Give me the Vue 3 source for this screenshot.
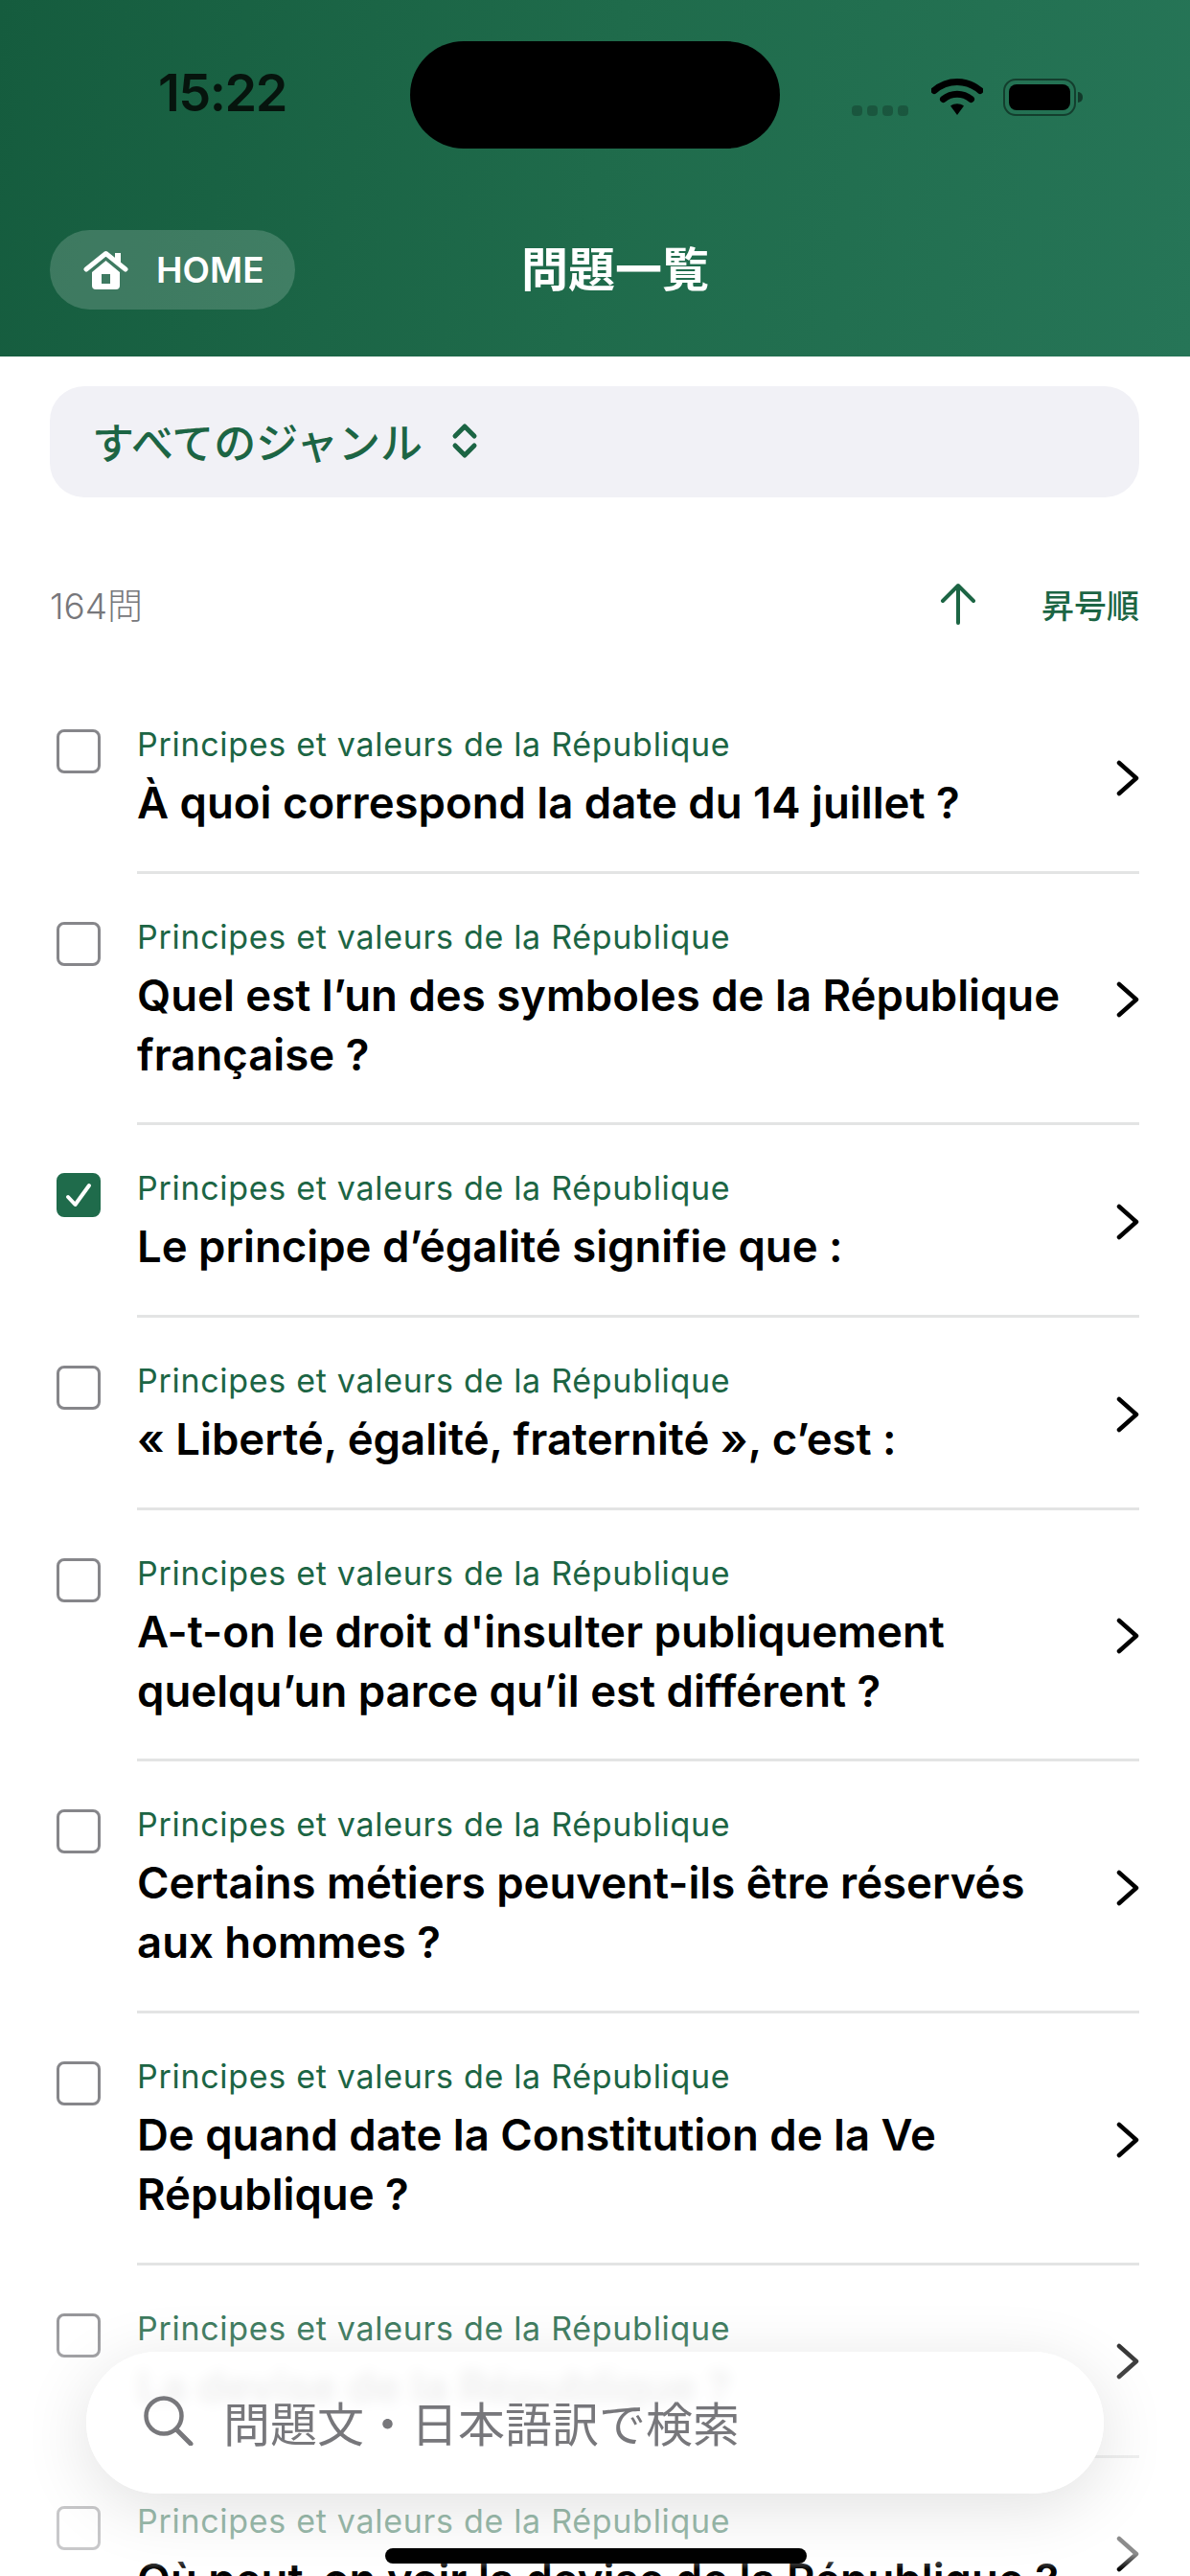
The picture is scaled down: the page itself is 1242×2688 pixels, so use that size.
<template>
  <div class="screen">
    <header class="header">
      <div class="status-bar">
        <span class="time">15:22</span>
        <div class="status-icons">
          <div class="signal">
            <i v-for="n in 4" :key="n"></i>
          </div>
          <svg class="wifi" width="54" height="40" viewBox="0 0 54 40">
            <path d="M3 13.5C17 1.5 37 1.5 51 13.5" fill="none" stroke="#000" stroke-width="7" stroke-linecap="round" />
            <path d="M12.5 22.5C21 15.5 33 15.5 41.5 22.5" fill="none" stroke="#000" stroke-width="7" stroke-linecap="round" />
            <path d="M20 29.5C24.500 26.500 29.500 26.500 34 29.500L27 39Z" fill="#000" />
          </svg>
          <div class="battery"><div class="battery-fill"></div></div>
          <div class="battery-nub"></div>
        </div>
      </div>
      <div class="island"></div>
      <div class="nav">
        <div class="home-pill">
          <svg width="47" height="41" viewBox="0 0 47 41">
            <path d="M33 3h6v11h-6z" fill="#fff" />
            <path d="M3 20L23.500 3.500L44 20" fill="none" stroke="#fff" stroke-width="5" stroke-linecap="round" stroke-linejoin="round" />
            <path fill-rule="evenodd" d="M23.500 11L38 23V37a4 4 0 0 1-4 4H13a4 4 0 0 1-4-4V23ZM19 25v10h9V25Z" fill="#fff" />
          </svg>
          <span>HOME</span>
        </div>
        <h1 class="title">問題一覧</h1>
      </div>
    </header>

    <div class="filter">
      <span>すべてのジャンル</span>
      <svg width="28" height="40" viewBox="0 0 28 40">
        <path d="M4 15L14 5L24 15M4 25L14 35L24 25" fill="none" stroke="#1c6544" stroke-width="5" stroke-linecap="round" stroke-linejoin="round" />
      </svg>
    </div>

    <div class="sort-row">
      <span class="count">164問</span>
      <div class="sort">
        <svg width="38" height="44" viewBox="0 0 38 44">
          <path d="M19 42V3M3 19L19 3L35 19" fill="none" stroke="#1c6544" stroke-width="4" stroke-linecap="round" stroke-linejoin="round" />
        </svg>
        <span>昇号順</span>
      </div>
    </div>

    <div class="list">
      <div v-for="(q, i) in questions" :key="i" class="row">
        <div :class="['checkbox', { checked: q.done }]">
          <svg v-if="q.done" width="28" height="26" viewBox="0 0 28 26">
            <path d="M3 15L10.500 23L25 3" fill="none" stroke="#fff" stroke-width="4" stroke-linecap="round" stroke-linejoin="round" />
          </svg>
        </div>
        <div class="row-body">
          <div class="row-text">
            <div class="category">Principes et valeurs de la République</div>
            <div class="question">{{ q.text }}</div>
          </div>
          <svg class="chevron" width="24" height="38" viewBox="0 0 24 38">
            <path d="M3 3L21 19L3 35" fill="none" stroke="#000" stroke-width="4.500" stroke-linecap="round" stroke-linejoin="round" />
          </svg>
        </div>
      </div>
    </div>

    <div class="fade"></div>
    <div class="search">
      <svg width="52" height="52" viewBox="0 0 52 52">
        <circle cx="21" cy="21" r="18.500" fill="none" stroke="#77777b" stroke-width="4.500" />
        <path d="M34 35L49 50" fill="none" stroke="#77777b" stroke-width="5" stroke-linecap="round" />
      </svg>
      <span class="placeholder">問題文・日本語訳で検索</span>
    </div>
    <div class="home-indicator"></div>
  </div>
</template>

<script setup>
const questions = [
  { text: 'À quoi correspond la date du 14 juillet ?' },
  { text: 'Quel est l’un des symboles de la République française ?' },
  { text: 'Le principe d’égalité signifie que :', done: true },
  { text: '« Liberté, égalité, fraternité », c’est :' },
  { text: "A-t-on le droit d'insulter publiquement quelqu’un parce qu’il est différent ?" },
  { text: 'Certains métiers peuvent-ils être réservés aux hommes ?' },
  { text: 'De quand date la Constitution de la Ve République ?' },
  { text: 'La devise de la République ?' },
  { text: 'Où peut-on voir la devise de la République ?' },
]
</script>

<style>
html,
body {
  margin: 0;
  background: #fff;
}
</style>

<style scoped>
.screen {
  position: relative;
  width: 1242px;
  height: 2688px;
  overflow: hidden;
  background: #fff;
  font-family: Inter, "Noto Sans CJK JP", sans-serif;
}

.header {
  box-sizing: border-box;
  height: 372px;
  padding-top: 73px;
  background: linear-gradient(100deg, #155c3e 0%, #1f6b4b 50%, #267557 100%);
}

.status-bar {
  display: flex;
  justify-content: space-between;
  align-items: flex-end;
  height: 48px;
  padding: 0 112px 0 165px;
}

.time {
  font-size: 54px;
  font-weight: 600;
  line-height: 48px;
  letter-spacing: -1.5px;
  color: #06140d;
}

.status-icons {
  display: flex;
  align-items: flex-end;
}

.signal {
  display: flex;
  gap: 5px;
  margin-right: 24px;
}

.signal i {
  width: 11px;
  height: 11px;
  border-radius: 4px;
  background: rgba(0, 0, 0, 0.22);
}

.wifi {
  margin-right: 21px;
}

.battery {
  box-sizing: border-box;
  width: 76px;
  height: 39px;
  padding: 4px;
  border: 2px solid rgba(0, 0, 0, 0.45);
  border-radius: 13px;
}

.battery-fill {
  height: 100%;
  border-radius: 8px;
  background: #000;
}

.battery-nub {
  width: 5px;
  height: 11px;
  margin: 0 0 14px 2px;
  border-radius: 0 6px 6px 0;
  background: rgba(0, 0, 0, 0.5);
}

.island {
  position: absolute;
  top: 43px;
  left: 428px;
  width: 386px;
  height: 112px;
  border-radius: 56px;
  background: #000;
}

.nav {
  display: flex;
  align-items: center;
  margin-top: 119px;
  padding-left: 52px;
}

.home-pill {
  box-sizing: border-box;
  display: flex;
  align-items: center;
  gap: 29px;
  width: 256px;
  height: 83px;
  padding-left: 35px;
  border-radius: 42px;
  background: rgba(255, 255, 255, 0.17);
  font-size: 37px;
  font-weight: 600;
  color: #fff;
}

.title {
  margin: 0 0 0 236px;
  font-size: 49px;
  font-weight: 700;
  line-height: 60px;
  color: #fff;
}

.filter {
  box-sizing: border-box;
  display: flex;
  align-items: center;
  gap: 30px;
  height: 116px;
  margin: 31px 53px 0 52px;
  padding: 0 0 3px 44px;
  border-radius: 36px;
  background: #f1f1f6;
  font-size: 44px;
  font-weight: 500;
  color: #1c6544;
}

.sort-row {
  display: flex;
  justify-content: space-between;
  align-items: center;
  height: 44px;
  margin: 89px 53px 59px 52px;
}

.count {
  font-size: 37px;
  font-weight: 300;
  color: #77777b;
}

.sort {
  display: flex;
  align-items: center;
  gap: 68px;
  font-size: 34px;
  font-weight: 500;
  color: #1c6544;
}

.row {
  display: flex;
  align-items: flex-start;
  padding-right: 53px;
}

.checkbox {
  box-sizing: border-box;
  display: flex;
  align-items: center;
  justify-content: center;
  flex: none;
  width: 46px;
  height: 46px;
  margin: 50px 38px 0 59px;
  border: 3.500px solid #86868a;
  border-radius: 8px;
}

.checkbox.checked {
  border-color: #1f6b4b;
  background: #1f6b4b;
}

.row-body {
  display: flex;
  align-items: center;
  flex: 1;
  min-width: 0;
  padding: 48px 0 39.700px;
  border-bottom: 3px solid #e3e4e4;
}

.row-text {
  flex: 1;
  min-width: 0;
  padding-right: 30px;
}

.category {
  font-size: 34px;
  line-height: 36px;
  letter-spacing: 0.7px;
  color: #1c6544;
}

.question {
  margin-top: 12px;
  font-size: 45.500px;
  font-weight: 600;
  line-height: 62px;
  color: #000;
}

.chevron {
  flex: none;
  margin-bottom: 5px;
}

.fade {
  position: absolute;
  left: 0;
  right: 0;
  top: 2360px;
  height: 328px;
  pointer-events: none;
  background: linear-gradient(
    180deg,
    rgba(255, 255, 255, 0) 0%,
    rgba(255, 255, 255, 0.2) 25%,
    rgba(255, 255, 255, 0.55) 80%,
    rgba(255, 255, 255, 0.55) 93%,
    rgba(255, 255, 255, 0) 98%
  );
}

.search {
  position: absolute;
  left: 90px;
  top: 2454px;
  box-sizing: border-box;
  display: flex;
  align-items: center;
  gap: 31px;
  width: 1062px;
  height: 148px;
  padding: 0 0 4px 60px;
  border-radius: 74px;
  background: rgba(255, 255, 255, 0.9);
  backdrop-filter: blur(7px);
  box-shadow: 0 14px 70px rgba(0, 0, 0, 0.12);
  font-size: 49px;
  color: #77777b;
}

.home-indicator {
  position: absolute;
  left: 402px;
  top: 2659px;
  width: 440px;
  height: 16px;
  border-radius: 8px;
  background: #000;
}
</style>
